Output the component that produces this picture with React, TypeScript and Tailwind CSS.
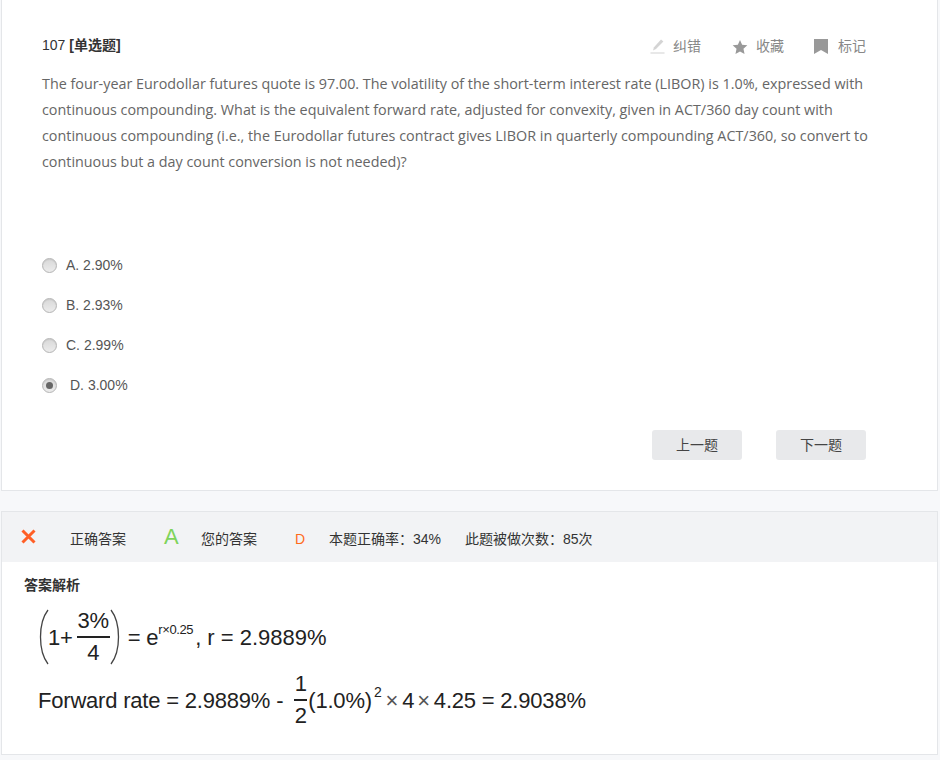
import { useState } from 'react';

const CJK = "font-['Liberation_Sans','Noto_Sans_CJK_SC',sans-serif]";

const options = [
  { label: 'A. 2.90%', gap: 'ml-[9px]' },
  { label: 'B. 2.93%', gap: 'ml-[9px]' },
  { label: 'C. 2.99%', gap: 'ml-[9px]' },
  { label: 'D. 3.00%', gap: 'ml-[13px]' },
];

function Radio({ checked }: { checked: boolean }) {
  return (
    <span className="flex h-[15px] w-[15px] shrink-0 items-center justify-center rounded-full border border-[#b4b4b4] bg-gradient-to-b from-[#d8d8d8] to-[#ececec] shadow-[inset_0_1px_1px_rgba(0,0,0,0.08)]">
      {checked && <span className="h-[7px] w-[7px] rounded-full bg-[#666666]" />}
    </span>
  );
}

function Paren({ flip, h, w }: { flip?: boolean; h: number; w: number }) {
  const d = flip ? `M1 1 C${w} ${h * 0.25} ${w} ${h * 0.75} 1 ${h - 1}` : `M${w - 1} 1 C0 ${h * 0.25} 0 ${h * 0.75} ${w - 1} ${h - 1}`;
  return (
    <svg width={w} height={h} viewBox={`0 0 ${w} ${h}`} fill="none" className="shrink-0">
      <path d={d} stroke="#444444" strokeWidth="1.3" />
    </svg>
  );
}

function Frac({ top, bottom, width }: { top: string; bottom: string; width: string }) {
  return (
    <span className="flex flex-col items-center leading-[28px]">
      <span>{top}</span>
      <span className={`my-[1px] h-[1.5px] bg-[#222222] ${width}`} />
      <span>{bottom}</span>
    </span>
  );
}

export default function App() {
  const [picked, setPicked] = useState(3);

  return (
    <div className={`h-[760px] w-[940px] overflow-hidden bg-[#f7f8fa] pl-px ${CJK}`}>
      <section className="h-[491px] w-[937px] border border-t-0 border-[#e4e6e9] bg-white pl-[40px] pr-[71px]">
        <div className="flex items-center justify-between pt-[36px]">
          <h2 className="mb-[3px] text-[14px] leading-[18px] text-[#333333]">
            107 <b className="font-bold">[单选题]</b>
          </h2>
          <div className="flex items-center text-[14px] text-[#888888]">
            <span className="flex w-[82px] items-center gap-[8px]">
              <svg width="15" height="15" viewBox="0 0 15 15" className="shrink-0">
                <path d="M11 0.5 L13.4 2.5 L6 10 L3 11.4 L4 8.2 Z" fill="#d4d4d4" />
                <path d="M0.5 14 H14.5" stroke="#d8d8d8" strokeWidth="1.2" />
              </svg>
              纠错
            </span>
            <span className="flex w-[82px] items-center gap-[8px]">
              <svg width="16" height="16" viewBox="0 0 24 24" fill="#999999" className="shrink-0">
                <path d="M12 1.5 L15.2 8.7 L23 9.5 L17.2 14.8 L18.8 22.5 L12 18.6 L5.2 22.5 L6.8 14.8 L1 9.5 L8.8 8.7 Z" />
              </svg>
              收藏
            </span>
            <span className="flex items-center gap-[10px]">
              <svg width="14" height="15" viewBox="0 0 14 15" fill="#999999" className="shrink-0">
                <path d="M0 0 H14 V15 L7 11 L0 15 Z" />
              </svg>
              标记
            </span>
          </div>
        </div>

        <p className="mt-[14px] w-[840px] font-['Open_Sans','Noto_Sans_CJK_SC',sans-serif] text-[14.35px] leading-[26px] text-[#666666]">
          The four-year Eurodollar futures quote is 97.00. The volatility of the short-term interest rate (LIBOR) is 1.0%, expressed with continuous compounding. What is the equivalent forward rate, adjusted for convexity, given in ACT/360 day count with continuous compounding (i.e., the Eurodollar futures contract gives LIBOR in quarterly compounding ACT/360, so convert to continuous but a day count conversion is not needed)?
        </p>

        <ul className="mt-[70px] flex flex-col">
          {options.map((o, i) => (
            <li key={o.label} className="flex h-[40px] cursor-pointer items-center text-[14px] text-[#555555]" onClick={() => setPicked(i)}>
              <Radio checked={picked === i} />
              <span className={o.gap}>{o.label}</span>
            </li>
          ))}
        </ul>

        <div className="mt-[25px] flex justify-end gap-[34px]">
          <button className="h-[30px] w-[90px] rounded-[3px] bg-[#e8e9eb] text-[14px] text-[#444444]">上一题</button>
          <button className="h-[30px] w-[90px] rounded-[3px] bg-[#e8e9eb] text-[14px] text-[#444444]">下一题</button>
        </div>
      </section>

      <section className="mt-[20px] h-[244px] w-[937px] border border-[#e4e6e9] bg-white">
        <div className="flex h-[50px] items-center bg-[#f2f3f5] pl-[19px] pt-[4px] text-[14px] text-[#333333]">
          <svg width="15" height="15" viewBox="0 0 15 15" className="shrink-0 -translate-y-[3px]">
            <path d="M1.5 1.5 L13.5 13.5 M13.5 1.5 L1.5 13.5" stroke="#ff5f26" strokeWidth="3" />
          </svg>
          <span className="ml-[34px]">正确答案</span>
          <span className="ml-[38px] w-[37px] -translate-y-[2px] text-[22px] leading-none text-[#7ed35b]">A</span>
          <span>您的答案</span>
          <span className="ml-[38px] w-[34px] text-[14px] text-[#ff6a1a]">D</span>
          <span>本题正确率：34%</span>
          <span className="ml-[24px]">此题被做次数：85次</span>
        </div>

        <div className="pl-[22px]">
          <h3 className="pt-[14px] text-[14px] font-bold leading-[18px] text-[#333333]">答案解析</h3>

          <div className="ml-[14px] mt-[15px] flex h-[56px] items-center font-['Liberation_Sans',sans-serif] text-[22px] tracking-[-0.2px] text-[#222222]">
            <Paren h={56} w={11} />
            <span className="ml-[-1px]">1+</span>
            <span className="ml-[4px]">
              <Frac top="3%" bottom="4" width="w-[33px]" />
            </span>
            <Paren flip h={56} w={11} />
            <span className="ml-[7px]">= e</span>
            <span className="mb-[14px] text-[13px] tracking-[-0.4px]">r×0.25</span>
            <span className="ml-[2px] tracking-normal">, r = 2.9889%</span>
          </div>

          <div className="ml-[14px] mt-[6px] flex h-[58px] items-center font-['Liberation_Sans',sans-serif] text-[22px] tracking-[-0.2px] text-[#222222]">
            <span>Forward rate = 2.9889% -</span>
            <span className="ml-[11px]">
              <Frac top="1" bottom="2" width="w-[13px]" />
            </span>
            <span className="ml-[1px]">(1.0%)</span>
            <span className="mb-[16px] ml-[2px] text-[14px]">2</span>
            <span className="ml-[4px] text-[#555555]">×</span>
            <span className="ml-[4px]">4</span>
            <span className="ml-[3px] text-[#555555]">×</span>
            <span className="ml-[4px]">4.25 = 2.9038%</span>
          </div>
        </div>
      </section>
    </div>
  );
}
